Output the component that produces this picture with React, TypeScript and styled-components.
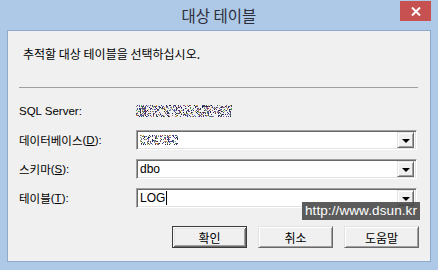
import React from "react";
import styled, { createGlobalStyle } from "styled-components";

const GlobalStyle = createGlobalStyle`
  html, body {
    margin: 0;
    padding: 0;
    background: #abc8e6;
  }
`;

const KO = `"Noto Sans CJK KR", "Liberation Sans", sans-serif`;
const LAT = `"Liberation Sans", "Noto Sans CJK KR", sans-serif`;

const Window = styled.div`
  position: relative;
  width: 438px;
  height: 270px;
  box-sizing: border-box;
  background: #adc9e7;
  display: flex;
  flex-direction: column;
  overflow: hidden;
`;

const TitleBar = styled.div`
  height: 30px;
  display: grid;
  grid-template-columns: 1fr auto 1fr;
`;

const Title = styled.div`
  grid-column: 2;
  align-self: center;
  font-family: ${KO};
  font-size: 15.5px;
  color: #2e2e3a;
  line-height: 20px;
  margin-top: -1px;
`;

const CloseButton = styled.div`
  grid-column: 3;
  justify-self: end;
  align-self: start;
  margin: 1px 7px 0 0;
  width: 31px;
  height: 20px;
  background: #c75050;
  display: flex;
  align-items: center;
  justify-content: center;
`;

const Client = styled.div`
  flex: 1;
  margin: 0 7px 8px 7px;
  border: 1px solid #8ea9c9;
  background: #f0f0f0;
  padding: 15px 13px 0 11px;
  display: flex;
  flex-direction: column;
`;

const Prompt = styled.div`
  font-family: ${KO};
  font-size: 12px;
  line-height: 16px;
  color: #000;
  margin-left: 4px;
`;

const Separator = styled.div`
  height: 1px;
  background: #a0a0a0;
  margin: 25px 0 0 0;
  width: 399px;
`;

const Form = styled.div`
  display: grid;
  grid-template-columns: 117px 281px;
  grid-auto-rows: 20px;
  row-gap: 9px;
  margin-top: 13px;
`;

const Label = styled.div<{ $latin?: boolean }>`
  font-family: ${(p) => (p.$latin ? LAT : KO)};
  font-size: ${(p) => (p.$latin ? "11.5px" : "11.5px")};
  color: #000;
  display: flex;
  align-items: center;
  white-space: nowrap;
`;

const Mnemonic = styled.span`
  font-family: ${LAT};
  font-size: 11.5px;
  text-decoration: underline;
`;

const Paren = styled.span`
  font-family: ${LAT};
  font-size: 11.5px;
`;

const Combo = styled.div`
  box-sizing: border-box;
  height: 20px;
  background: #fff;
  border: 1px solid;
  border-color: #a0a0a0 #ffffff #ffffff #a0a0a0;
  box-shadow: inset 1px 1px 0 #696969, inset -1px -1px 0 #e3e3e3;
  display: flex;
  align-items: center;
  padding: 2px 2px 2px 3px;
`;

const ComboText = styled.div`
  flex: 1;
  font-family: ${LAT};
  font-size: 12px;
  color: #000;
  display: flex;
  align-items: center;
`;

const Caret = styled.span`
  display: inline-block;
  width: 1px;
  height: 14px;
  background: #000;
  margin-left: 1px;
`;

const DropButton = styled.div`
  box-sizing: border-box;
  width: 17px;
  height: 16px;
  background: #f0f0f0;
  border: 1px solid;
  border-color: #e3e3e3 #696969 #696969 #e3e3e3;
  box-shadow: inset 1px 1px 0 #fff, inset -1px -1px 0 #a0a0a0;
  display: flex;
  align-items: center;
  justify-content: center;
`;

const Arrow = styled.div`
  width: 0;
  height: 0;
  border-left: 4px solid transparent;
  border-right: 4px solid transparent;
  border-top: 4px solid #000;
  margin-top: 1px;
`;

const Buttons = styled.div`
  display: flex;
  justify-content: flex-end;
  gap: 11px;
  margin: 18px -2px 0 0;
`;

const Button = styled.div<{ $default?: boolean }>`
  box-sizing: border-box;
  width: 75px;
  height: 22px;
  background: #f0f0f0;
  font-family: ${KO};
  font-size: 12px;
  color: #000;
  display: flex;
  align-items: center;
  justify-content: center;
  border: 1px solid;
  border-color: ${(p) =>
    p.$default ? "#3c3c3c" : "#e3e3e3 #696969 #696969 #e3e3e3"};
  box-shadow: ${(p) =>
    p.$default
      ? "inset 1px 1px 0 #f8f8f8, inset -1px -1px 0 #696969, inset 2px 2px 0 #e3e3e3, inset -2px -2px 0 #a0a0a0"
      : "inset 1px 1px 0 #fff, inset -1px -1px 0 #a0a0a0"};
`;

const Tooltip = styled.div`
  position: absolute;
  left: 302px;
  top: 202px;
  width: 118px;
  height: 18px;
  background: rgba(70, 70, 70, 0.88);
  color: #fff;
  font-family: ${LAT};
  font-size: 13.5px;
  line-height: 18px;
  text-align: center;
  letter-spacing: 0.1px;
`;

// scrambled / masked text drawn as speckles
const Speckle: React.FC<{ width: number; height: number; seed: number; density: number }> = ({
  width,
  height,
  seed,
  density,
}) => {
  let s = seed;
  const rnd = () => {
    s = (s * 9301 + 49297) % 233280;
    return s / 233280;
  };
  const palette = ["#101a50", "#1b2a6b", "#2a3a8a", "#20204a", "#5a2a7a", "#b04040", "#c0a030", "#3a8a4a", "#6a80c8", "#101030"];
  const dots: React.ReactNode[] = [];
  for (let i = 0; i < width * height * density; i++) {
    const x = Math.floor(rnd() * width);
    const y = Math.floor(rnd() * height);
    const c = palette[Math.floor(rnd() * palette.length)];
    dots.push(<rect key={i} x={x} y={y} width={1} height={1} fill={c} opacity={0.7 + rnd() * 0.3} />);
  }
  return (
    <svg width={width} height={height} style={{ display: "block" }}>
      {dots}
    </svg>
  );
};

export default function App() {
  return (
    <Window>
      <GlobalStyle />
      <TitleBar>
        <Title>대상 테이블</Title>
        <CloseButton>
          <svg width="10" height="9" viewBox="0 0 10 9">
            <path d="M1 0.5 L9 8.5 M9 0.5 L1 8.5" stroke="#fff" strokeWidth="2" />
          </svg>
        </CloseButton>
      </TitleBar>
      <Client>
        <Prompt>추적할 대상 테이블을 선택하십시오.</Prompt>
        <Separator />
        <Form>
          <Label $latin>SQL Server:</Label>
          <Label>
            <Speckle width={96} height={12} seed={17} density={0.5} />
          </Label>
          <Label>
            데이터베이스<Paren>(</Paren>
            <Mnemonic>D</Mnemonic>
            <Paren>):</Paren>
          </Label>
          <Combo>
            <ComboText>
              <Speckle width={38} height={10} seed={5} density={0.5} />
            </ComboText>
            <DropButton>
              <Arrow />
            </DropButton>
          </Combo>
          <Label>
            스키마<Paren>(</Paren>
            <Mnemonic>S</Mnemonic>
            <Paren>):</Paren>
          </Label>
          <Combo>
            <ComboText>dbo</ComboText>
            <DropButton>
              <Arrow />
            </DropButton>
          </Combo>
          <Label>
            테이블<Paren>(</Paren>
            <Mnemonic>T</Mnemonic>
            <Paren>):</Paren>
          </Label>
          <Combo>
            <ComboText>
              LOG
              <Caret />
            </ComboText>
            <DropButton>
              <Arrow />
            </DropButton>
          </Combo>
        </Form>
        <Buttons>
          <Button $default>확인</Button>
          <Button>취소</Button>
          <Button>도움말</Button>
        </Buttons>
      </Client>
      <Tooltip>http://www.dsun.kr</Tooltip>
    </Window>
  );
}
